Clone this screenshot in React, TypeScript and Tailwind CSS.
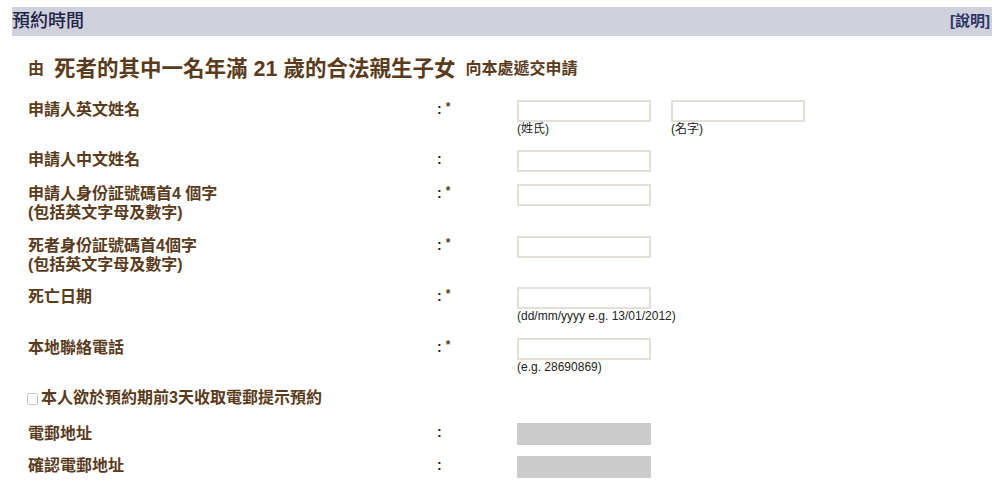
import React from "react";

const font = { fontFamily: '"Liberation Sans", "Noto Sans CJK TC", sans-serif' };

function Colon({ star }: { star?: boolean }) {
  return (
    <div className="w-[80px] shrink-0 text-[14px] leading-[19px] font-bold text-[#222]">
      :{star && <span className="relative -top-[3px] ml-[4px] text-[12px] text-[#5a3c1c]">*</span>}
    </div>
  );
}

function Input({ grey }: { grey?: boolean }) {
  return grey ? (
    <div className="w-[134px] h-[22px] bg-[#cccccc]" />
  ) : (
    <div className="w-[134px] h-[22px] border-2 border-[#e4dfd6] bg-white" />
  );
}

function Hint({ children }: { children: React.ReactNode }) {
  return <div className="text-[12px] leading-[14px] text-[#222]">{children}</div>;
}

function Label({ children }: { children: React.ReactNode }) {
  return (
    <div className="w-[409px] shrink-0 text-[16px] leading-[19px] font-bold text-[#5a3c1c]">{children}</div>
  );
}

export default function App() {
  return (
    <div className="w-[1000px] h-[491px] bg-white overflow-hidden" style={font}>
      <div className="pt-[7px] pl-[12px] w-[992px]">
        <div className="h-[29px] bg-[#cfd2dd] flex items-center justify-between">
          <span className="text-[18px] font-medium text-[#1e2446]">預約時間</span>
          <span className="text-[15px] font-bold text-[#2d3566] pr-[2px]">[說明]</span>
        </div>
        <div className="pl-[16px]">
          <div className="mt-[19px] mb-[17px] h-[28px] flex items-center font-bold text-[#5a3c1c]">
            <span className="text-[16px]">由</span>
            <span className="text-[21.5px] ml-[10px]">死者的其中一名年滿 21 歲的合法親生子女</span>
            <span className="text-[16px] ml-[10px]">向本處遞交申請</span>
          </div>

          <div className="flex mb-[14px]">
            <Label>申請人英文姓名</Label>
            <Colon star />
            <div className="flex gap-[20px]">
              <div>
                <Input />
                <Hint>(姓氏)</Hint>
              </div>
              <div>
                <Input />
                <Hint>(名字)</Hint>
              </div>
            </div>
          </div>

          <div className="flex mb-[12px]">
            <Label>申請人中文姓名</Label>
            <Colon />
            <Input />
          </div>

          <div className="flex mb-[14px]">
            <Label>
              申請人身份証號碼首4 個字
              <br />
              (包括英文字母及數字)
            </Label>
            <Colon star />
            <Input />
          </div>

          <div className="flex mb-[13px]">
            <Label>
              死者身份証號碼首4個字
              <br />
              (包括英文字母及數字)
            </Label>
            <Colon star />
            <Input />
          </div>

          <div className="flex mb-[15px]">
            <Label>死亡日期</Label>
            <Colon star />
            <div>
              <Input />
              <Hint>(dd/mm/yyyy e.g. 13/01/2012)</Hint>
            </div>
          </div>

          <div className="flex mb-[14px]">
            <Label>本地聯絡電話</Label>
            <Colon star />
            <div>
              <Input />
              <Hint>(e.g. 28690869)</Hint>
            </div>
          </div>

          <div className="flex items-center mb-[16px] h-[19px] -ml-[1px]">
            <span className="inline-block w-[11px] h-[12px] border border-[#c9c9c9] rounded-[2px] bg-white mr-[3px] mt-[3px]" />
            <span className="text-[16px] leading-[19px] font-bold text-[#5a3c1c]">本人欲於預約期前3天收取電郵提示預約</span>
          </div>

          <div className="flex mb-[11px]">
            <Label>
              <div className="pt-[1px]">電郵地址</div>
            </Label>
            <Colon />
            <Input grey />
          </div>

          <div className="flex">
            <Label>
              <div>確認電郵地址</div>
            </Label>
            <Colon />
            <Input grey />
          </div>
        </div>
      </div>
    </div>
  );
}
